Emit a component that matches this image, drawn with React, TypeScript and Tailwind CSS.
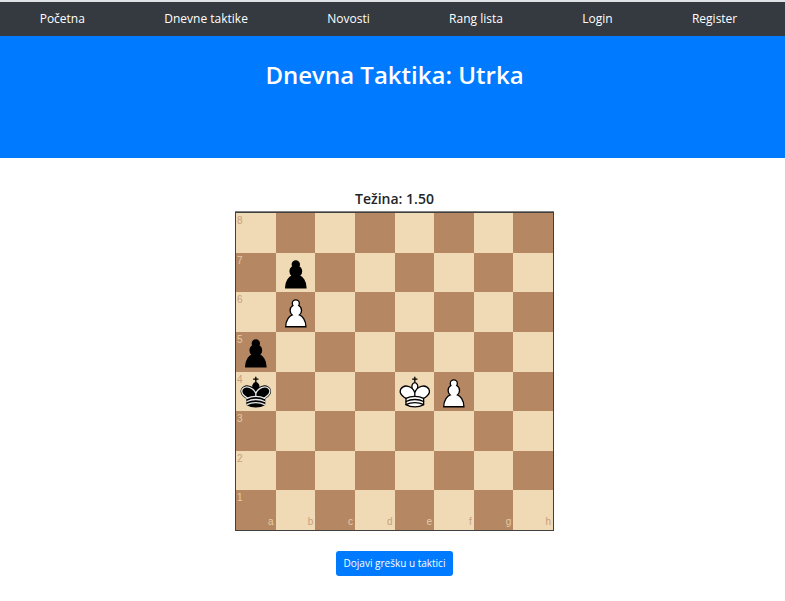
const NAV_ITEMS = ['Početna', 'Dnevne taktike', 'Novosti', 'Rang lista', 'Login', 'Register'];
const FILES = ['a', 'b', 'c', 'd', 'e', 'f', 'g', 'h'];
const RANKS = [8, 7, 6, 5, 4, 3, 2, 1];

type Piece = 'whiteKing' | 'blackKing' | 'whitePawn' | 'blackPawn';

const POSITION: Record<string, Piece> = {
  b7: 'blackPawn',
  b6: 'whitePawn',
  a5: 'blackPawn',
  a4: 'blackKing',
  e4: 'whiteKing',
  f4: 'whitePawn',
};

function Pawn({ fill }: { fill: string }) {
  return (
    <path
      d="M22.5 9c-2.21 0-4 1.79-4 4 0 .89.29 1.71.78 2.38C17.33 16.5 16 18.59 16 21c0 2.03.94 3.84 2.41 5.03-3 1.06-7.41 5.55-7.41 13.47h23c0-7.92-4.41-12.41-7.41-13.47 1.47-1.19 2.41-3 2.41-5.03 0-2.41-1.33-4.5-3.28-5.62.49-.67.78-1.49.78-2.38 0-2.21-1.79-4-4-4z"
      fill={fill}
      stroke="#000"
      strokeWidth="1.5"
      strokeLinecap="round"
    />
  );
}

function King({ fill, line }: { fill: string; line: string }) {
  const black = fill === '#000';
  return (
    <g fill="none" stroke="#000" strokeWidth="1.5" strokeLinecap="round" strokeLinejoin="round">
      <path d="M22.5 11.63V6M20 8h5" />
      <path
        d="M22.5 25s4.5-7.5 3-10.5c0 0-1-2.5-3-2.5s-3 2.5-3 2.5c-1.5 3 3 10.5 3 10.5"
        fill={fill}
        strokeLinecap="butt"
      />
      <path
        d="M12.5 37c5.5 3.5 14.5 3.5 20 0v-7s9-4.5 6-10.5c-4-6.5-13.5-3.5-16 4V27v-3.5c-2.5-7.5-12-10.5-16-4-3 6 6 10.5 6 10.5v7"
        fill={fill}
      />
      {black && (
        <path
          d="M32 29.5s8.5-4 6.03-9.65C34.15 14 25 18 22.5 24.5v2.1-2.1C20 18 10.85 14 6.97 19.85 4.5 25.5 13 29.5 13 29.5"
          stroke={line}
        />
      )}
      <path
        d="M12.5 30c5.5-3 14.5-3 20 0m-20 3.5c5.5-3 14.5-3 20 0m-20 3.5c5.5-3 14.5-3 20 0"
        stroke={line}
      />
    </g>
  );
}

function PieceIcon({ piece }: { piece: Piece }) {
  return (
    <svg viewBox="0 0 45 45" className="size-full" role="img" aria-label={piece}>
      {piece === 'whitePawn' && <Pawn fill="#fff" />}
      {piece === 'blackPawn' && <Pawn fill="#000" />}
      {piece === 'whiteKing' && <King fill="#fff" line="#000" />}
      {piece === 'blackKing' && <King fill="#000" line="#e8e8e8" />}
    </svg>
  );
}

function Board() {
  return (
    <div className="grid aspect-square w-full max-w-[319px] grid-cols-8 grid-rows-8 border border-[#404040] font-['Liberation_Sans',Arial,sans-serif] text-[10px] leading-none shadow-[0_-1px_0_#808080]">
      {RANKS.map((rank, row) =>
        FILES.map((file, col) => {
          const light = (row + col) % 2 === 0;
          const piece = POSITION[`${file}${rank}`];
          return (
            <div
              key={`${file}${rank}`}
              className={`relative min-h-0 min-w-0 ${light ? 'bg-[#f0d9b5] text-[#c79f7c]' : 'bg-[#b58863] text-[#e6cba6]'}`}
            >
              {col === 0 && <span className="absolute top-[3px] left-px">{rank}</span>}
              {rank === 1 && <span className="absolute right-0.5 bottom-[3px]">{file}</span>}
              {piece && <PieceIcon piece={piece} />}
            </div>
          );
        }),
      )}
    </div>
  );
}

export default function App() {
  return (
    <div className="min-h-screen bg-white font-['Open_Sans','Noto_Sans',sans-serif] text-[#212529]">
      <nav className="flex h-9 items-center justify-around border-t-2 border-[#dee2e6] bg-[#343a40] pr-2 text-xs text-white">
        {NAV_ITEMS.map((item) => (
          <a key={item} href="#" className="whitespace-nowrap">
            {item}
          </a>
        ))}
      </nav>
      <header className="bg-[#007bff] pt-6 pb-[68px] pl-1 text-center text-white">
        <h1 className="text-2xl leading-[30px] font-semibold">Dnevna Taktika: Utrka</h1>
      </header>
      <main className="flex flex-col items-center pt-8 pb-6 pl-1">
        <h2 className="mb-1 text-sm leading-[18px] font-semibold">Težina: 1.50</h2>
        <Board />
        <button type="button" className="mt-5 h-[25px] rounded-[3px] bg-[#007bff] px-2 text-[10px] text-white">
          Dojavi grešku u taktici
        </button>
      </main>
    </div>
  );
}
